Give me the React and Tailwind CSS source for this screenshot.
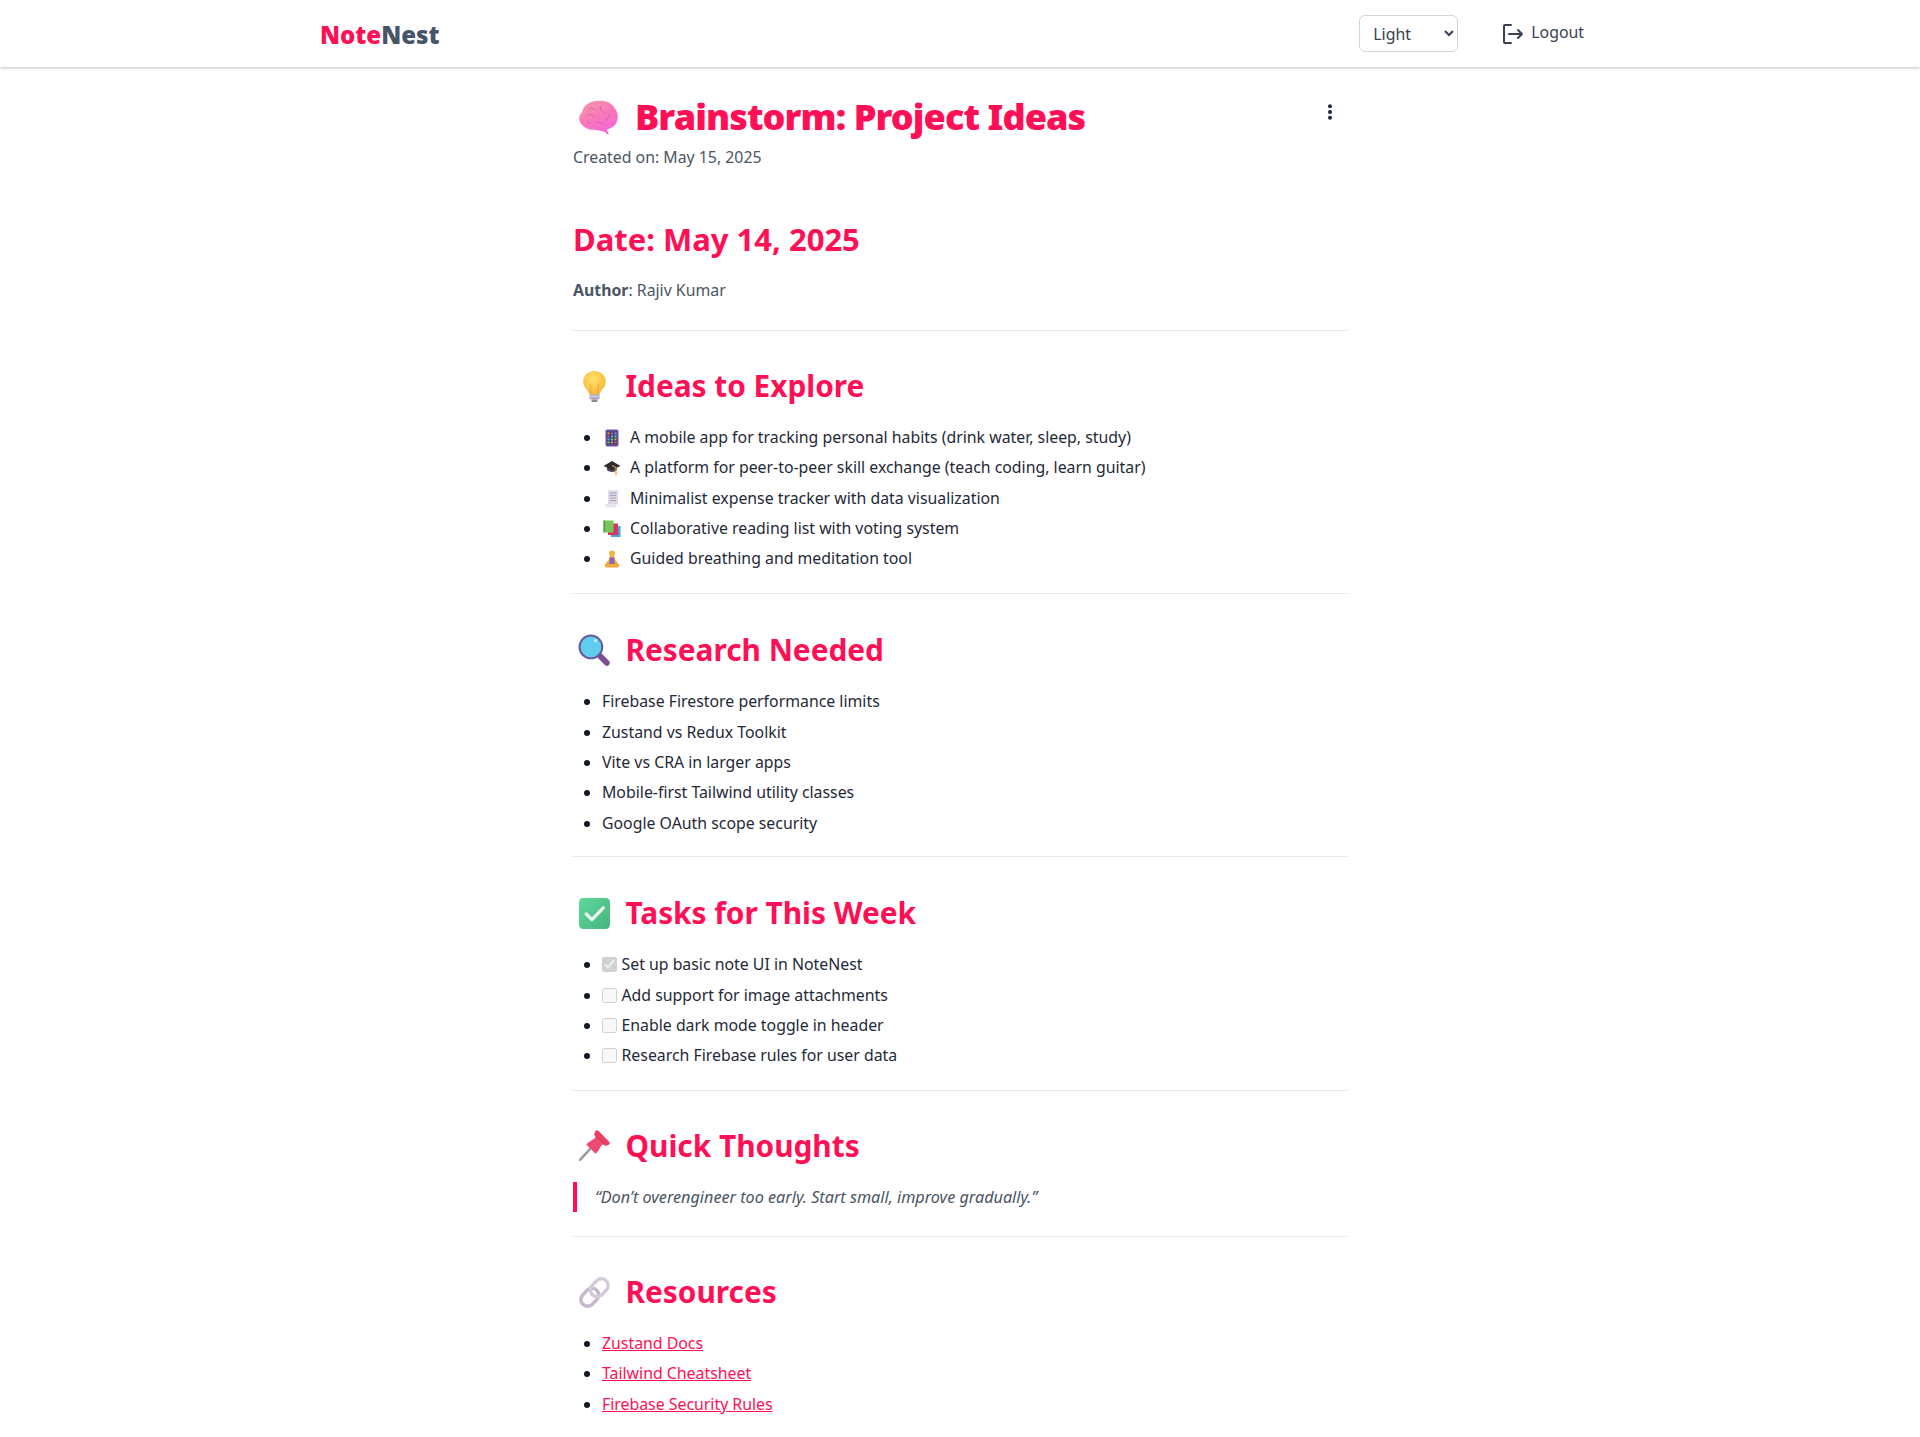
import React from "react";

const F = "font-['Noto_Sans','Open_Sans',sans-serif]";

function Brain({ className }) {
  return (
    <svg viewBox="0 0 40 34" className={className}>
      <defs>
        <linearGradient id="br" x1="0" y1="0" x2="0.6" y2="1">
          <stop offset="0" stopColor="#f59aa8" />
          <stop offset="0.55" stopColor="#f779b8" />
          <stop offset="1" stopColor="#f765d8" />
        </linearGradient>
      </defs>
      <path d="M3 23C0 19 1 14 4 12C5 6 10 2 17 1C24 0 32 1 36 8C39 12 40 18 37 23C34 27 30 28 28 29L30 33C29 34 28 33 26 31C22 30 18 29 15 29C10 29 6 27 3 23Z" fill="url(#br)" />
      <path d="M10 9C13 7 16 8 17 10M8 15C11 13 14 14 15 17M22 6C21 10 24 12 27 12M32 13C29 15 29 19 26 21M17 21C20 22 23 22 25 24M12 23C10 22 9 21 9 20" stroke="#d9568f" strokeWidth="0.7" fill="none" />
    </svg>
  );
}
function Bulb({ className }) {
  return (
    <svg viewBox="0 0 32 32" className={className}>
      <defs>
        <radialGradient id="bu" cx="0.45" cy="0.35" r="0.7">
          <stop offset="0" stopColor="#ffe36a" />
          <stop offset="1" stopColor="#f9b233" />
        </radialGradient>
      </defs>
      <path d="M16 1C9 1 5 6 5 11.5C5 17 10 19 11 24H21C22 19 27 17 27 11.5C27 6 23 1 16 1Z" fill="url(#bu)" />
      <path d="M13 23L12 14M19 23L20 14" stroke="#e8a23a" strokeWidth="0.8" fill="none" />
      <rect x="11" y="23.5" width="10" height="5" rx="1.5" fill="#b4acbc" />
      <rect x="11" y="25" width="10" height="1" fill="#d9d4de" />
      <rect x="13" y="28.5" width="6" height="2.5" rx="1.2" fill="#8d8595" />
    </svg>
  );
}
function Magnifier({ className }) {
  return (
    <svg viewBox="0 0 32 32" className={className}>
      <path d="M20 20L28 28" stroke="#7d4f8e" strokeWidth="5.5" strokeLinecap="round" />
      <circle cx="12.5" cy="12.5" r="11" fill="#5fcdee" stroke="#6a5a9c" strokeWidth="2" />
      <circle cx="17" cy="6.5" r="1.7" fill="#bdeefb" />
    </svg>
  );
}
function Check({ className }) {
  return (
    <svg viewBox="0 0 32 32" className={className}>
      <defs>
        <linearGradient id="ch" x1="0" y1="0" x2="1" y2="1">
          <stop offset="0" stopColor="#5cd99a" />
          <stop offset="1" stopColor="#47b47f" />
        </linearGradient>
      </defs>
      <rect x="1" y="1" width="30" height="30" rx="4" fill="url(#ch)" />
      <path d="M8 16.5L13.5 22L24.5 10.5" stroke="#eaf8f0" strokeWidth="3.2" fill="none" strokeLinecap="round" strokeLinejoin="round" />
    </svg>
  );
}
function Pin({ className }) {
  return (
    <svg viewBox="0 0 32 32" className={className}>
      <path d="M2 30L12 19" stroke="#9b9aa3" strokeWidth="2.4" strokeLinecap="round" />
      <path d="M8 15C10 12 15 11 17 8L24 15C21 17 21 21 17 24Z" fill="#ee4a72" />
      <path d="M17 2C17.5 1 19 1 20 2L30 12C31 13 31 14.5 30 15L27 16.5L15.5 5Z" fill="#ef3d64" />
      <path d="M17 8L16 5L27 16L24 15Z" fill="#d72f56" />
    </svg>
  );
}
function Chain({ className }) {
  return (
    <svg viewBox="0 0 32 32" className={className} fill="none">
      <g transform="rotate(-45 16 16)">
        <rect x="0" y="9.5" width="19" height="13" rx="6.5" stroke="#c4b9cc" strokeWidth="3.4" />
        <rect x="13" y="9.5" width="19" height="13" rx="6.5" stroke="#d4cbda" strokeWidth="3.4" />
      </g>
    </svg>
  );
}
function Phone({ className }) {
  return (
    <svg viewBox="0 0 18 18" className={className}>
      <rect x="2.5" y="0.5" width="13" height="17" rx="1.8" fill="#6b4f9c" />
      <rect x="4" y="2.5" width="10" height="13" fill="#453f78" />
      {[3.5, 6.5, 9.5, 12.5].flatMap((y, r) =>
        [4.5, 8, 11.5].map((x, c) => (
          <rect key={`${r}${c}`} x={x} y={y} width="2" height="1.8" fill={["#f4a33a", "#ec4d6b", "#47c1e8", "#6bd08a"][(r + c) % 4]} />
        ))
      )}
    </svg>
  );
}
function Cap({ className }) {
  return (
    <svg viewBox="0 0 18 18" className={className}>
      <path d="M4 8V11C6 13.5 12 13.5 14 11V8Z" fill="#4a4454" />
      <path d="M9 2L17.5 7L9 11L0.5 7Z" fill="#2f2a38" />
      <path d="M9 6.5L13 8.5V14.5" stroke="#f0a030" strokeWidth="1.1" fill="none" />
      <path d="M12.2 14L13 17L13.9 14Z" fill="#f0a030" />
    </svg>
  );
}
function Receipt({ className }) {
  return (
    <svg viewBox="0 0 18 18" className={className}>
      <rect x="5" y="0.5" width="10" height="14" fill="#ddd6e6" />
      <path d="M2 14H13V16C13 17 12 17.5 11 17.5H4C3 17.5 2 16.5 2 14Z" fill="#e8e2ef" />
      <path d="M7 3H13M7 5.5H13M7 8H13M7 10.5H13" stroke="#aea4bb" strokeWidth="1" />
    </svg>
  );
}
function Books({ className }) {
  return (
    <svg viewBox="0 0 18 18" className={className}>
      <rect x="8" y="6" width="9.5" height="11" fill="#4aa3e0" />
      <rect x="5" y="3.5" width="10" height="11.5" fill="#d9345f" />
      <rect x="0.5" y="0.5" width="10" height="12" fill="#77c75a" />
      <rect x="0.5" y="0.5" width="1.6" height="12" fill="#4e9e45" />
    </svg>
  );
}
function Person({ className }) {
  return (
    <svg viewBox="0 0 18 18" className={className}>
      <path d="M9 5.5C7 5.5 5.8 7 5.6 10L2 14.5C1.2 15.8 2 17.5 3.5 17.5H14.5C16 17.5 16.8 15.8 16 14.5L12.4 10C12.2 7 11 5.5 9 5.5Z" fill="#f2a93b" />
      <path d="M6.8 7.5H11.2L11.8 14H6.2Z" fill="#8468b5" />
      <circle cx="9" cy="3.5" r="3" fill="#f3b23f" />
    </svg>
  );
}

function H2({ icon: Icon, children }) {
  return (
    <h2 className="flex items-center gap-[14.5px] pl-[5px] text-[29.8px] leading-[36px] font-bold text-[#ff0f55] mb-[18px]">
      <Icon className="w-[33px] h-[33px] shrink-0" />
      <span>{children}</span>
    </h2>
  );
}

function Hr() {
  return <hr className="border-t border-[#e5e7eb] my-[17px]" />;
}

function Bullets({ children }) {
  return <ul className="list-disc pl-[29px] text-[#1f2937] marker:text-[#111827]">{children}</ul>;
}

function Li({ icon: Icon, children }) {
  return (
    <li className="h-[30.3px] leading-[30.3px]">
      {Icon ? <Icon className="inline-block w-[18px] h-[18px] ml-[1px] mr-[9px] align-[-4px]" /> : null}
      {children}
    </li>
  );
}

function Task({ checked, children }) {
  return (
    <li className="h-[30.3px] leading-[30.3px]">
      <input type="checkbox" readOnly disabled checked={checked} className="inline-block w-[15px] h-[15px] mr-[3px] align-[-2px] m-0" />
      <span className="ml-[1.5px]">{children}</span>
    </li>
  );
}

export default function App() {
  return (
    <div className={`${F} bg-white text-[15.85px] overflow-hidden h-[1437px]`}>
      <header className="h-[67px] bg-white shadow-[0_1px_3px_rgba(0,0,0,0.25)]">
        <div className="mx-auto w-[1280px] h-full flex items-center justify-between pr-[16px]">
          <div className="text-[24px] font-black translate-y-[1px]">
            <span className="text-[#ff0f55]">Note</span>
            <span className="text-[#475569]">Nest</span>
          </div>
          <div className="flex items-center gap-[43px]">
            <select className="w-[99px] h-[37px] border border-[#d1d5db] rounded-[6px] bg-white pl-[9px] text-[#374151]" defaultValue="Light">
              <option>Light</option>
              <option>Dark</option>
            </select>
            <button className="flex items-center gap-[6px] text-[#374151] -translate-y-[1px]">
              <svg viewBox="0 0 24 24" className="w-[24px] h-[24px] translate-y-[1px]" fill="none" stroke="#374151" strokeWidth="2" strokeLinecap="round" strokeLinejoin="round">
                <path d="M10 3H4a1 1 0 0 0-1 1v16a1 1 0 0 0 1 1h6" />
                <path d="M8 12h13M17 8l4 4-4 4" />
              </svg>
              Logout
            </button>
          </div>
        </div>
      </header>
      <main className="w-[774px] ml-[573px]">
        <div className="flex items-start justify-between pt-[26px]">
          <h1 className="flex items-center gap-[16px] pl-[5px] text-[36px] leading-[48px] font-black tracking-[-0.9px] text-[#ff0f55]">
            <Brain className="w-[41px] h-[35px]" />
            <span>Brainstorm: Project Ideas</span>
          </h1>
          <svg viewBox="0 0 24 24" className="w-[20px] h-[20px] mt-[9px] mr-[7px]" fill="#1f2937">
            <circle cx="12" cy="5" r="2.4" />
            <circle cx="12" cy="12" r="2.4" />
            <circle cx="12" cy="19" r="2.4" />
          </svg>
        </div>
        <p className="text-[#4b5563] leading-[24px] mt-[4px]">Created on: May 15, 2025</p>
        <h2 className="text-[31px] leading-[36px] font-bold text-[#ff0f55] mt-[52px]">Date: May 14, 2025</h2>
        <p className="text-[#4b5563] leading-[24px] mt-[21px]"><strong className="font-bold text-[#4b5563]">Author</strong>: Rajiv Kumar</p>
        <div className="h-[11px]" />
        <Hr />
        <div className="h-[20px]" />
        <H2 icon={Bulb}>Ideas to Explore</H2>
        <Bullets>
          <Li icon={Phone}>A mobile app for tracking personal habits (drink water, sleep, study)</Li>
          <Li icon={Cap}>A platform for peer-to-peer skill exchange (teach coding, learn guitar)</Li>
          <Li icon={Receipt}>Minimalist expense tracker with data visualization</Li>
          <Li icon={Books}>Collaborative reading list with voting system</Li>
          <Li icon={Person}>Guided breathing and meditation tool</Li>
        </Bullets>
        <div className="h-[3px]" />
        <Hr />
        <div className="h-[21px]" />
        <H2 icon={Magnifier}>Research Needed</H2>
        <Bullets>
          <Li>Firebase Firestore performance limits</Li>
          <Li>Zustand vs Redux Toolkit</Li>
          <Li>Vite vs CRA in larger apps</Li>
          <Li>Mobile-first Tailwind utility classes</Li>
          <Li>Google OAuth scope security</Li>
        </Bullets>
        <div className="h-[1px]" />
        <Hr />
        <div className="h-[21.5px]" />
        <H2 icon={Check}>Tasks for This Week</H2>
        <Bullets>
          <Task checked>Set up basic note UI in NoteNest</Task>
          <Task>Add support for image attachments</Task>
          <Task>Enable dark mode toggle in header</Task>
          <Task>Research Firebase rules for user data</Task>
        </Bullets>
        <div className="h-[2px]" />
        <Hr />
        <div className="h-[20px]" />
        <H2 icon={Pin}>Quick Thoughts</H2>
        <blockquote className="border-l-4 border-[#ff0f55] pl-[18px] italic text-[16.2px] text-[#4b5563] h-[30px] leading-[30px]">
          “Don’t overengineer too early. Start small, improve gradually.”
        </blockquote>
        <div className="h-[7px]" />
        <Hr />
        <div className="h-[20.5px]" />
        <H2 icon={Chain}>Resources</H2>
        <Bullets>
          <Li><a className="text-[#ff0f55] underline" href="#z">Zustand Docs</a></Li>
          <Li><a className="text-[#ff0f55] underline" href="#t">Tailwind Cheatsheet</a></Li>
          <Li><a className="text-[#ff0f55] underline" href="#f">Firebase Security Rules</a></Li>
        </Bullets>
      </main>
    </div>
  );
}
